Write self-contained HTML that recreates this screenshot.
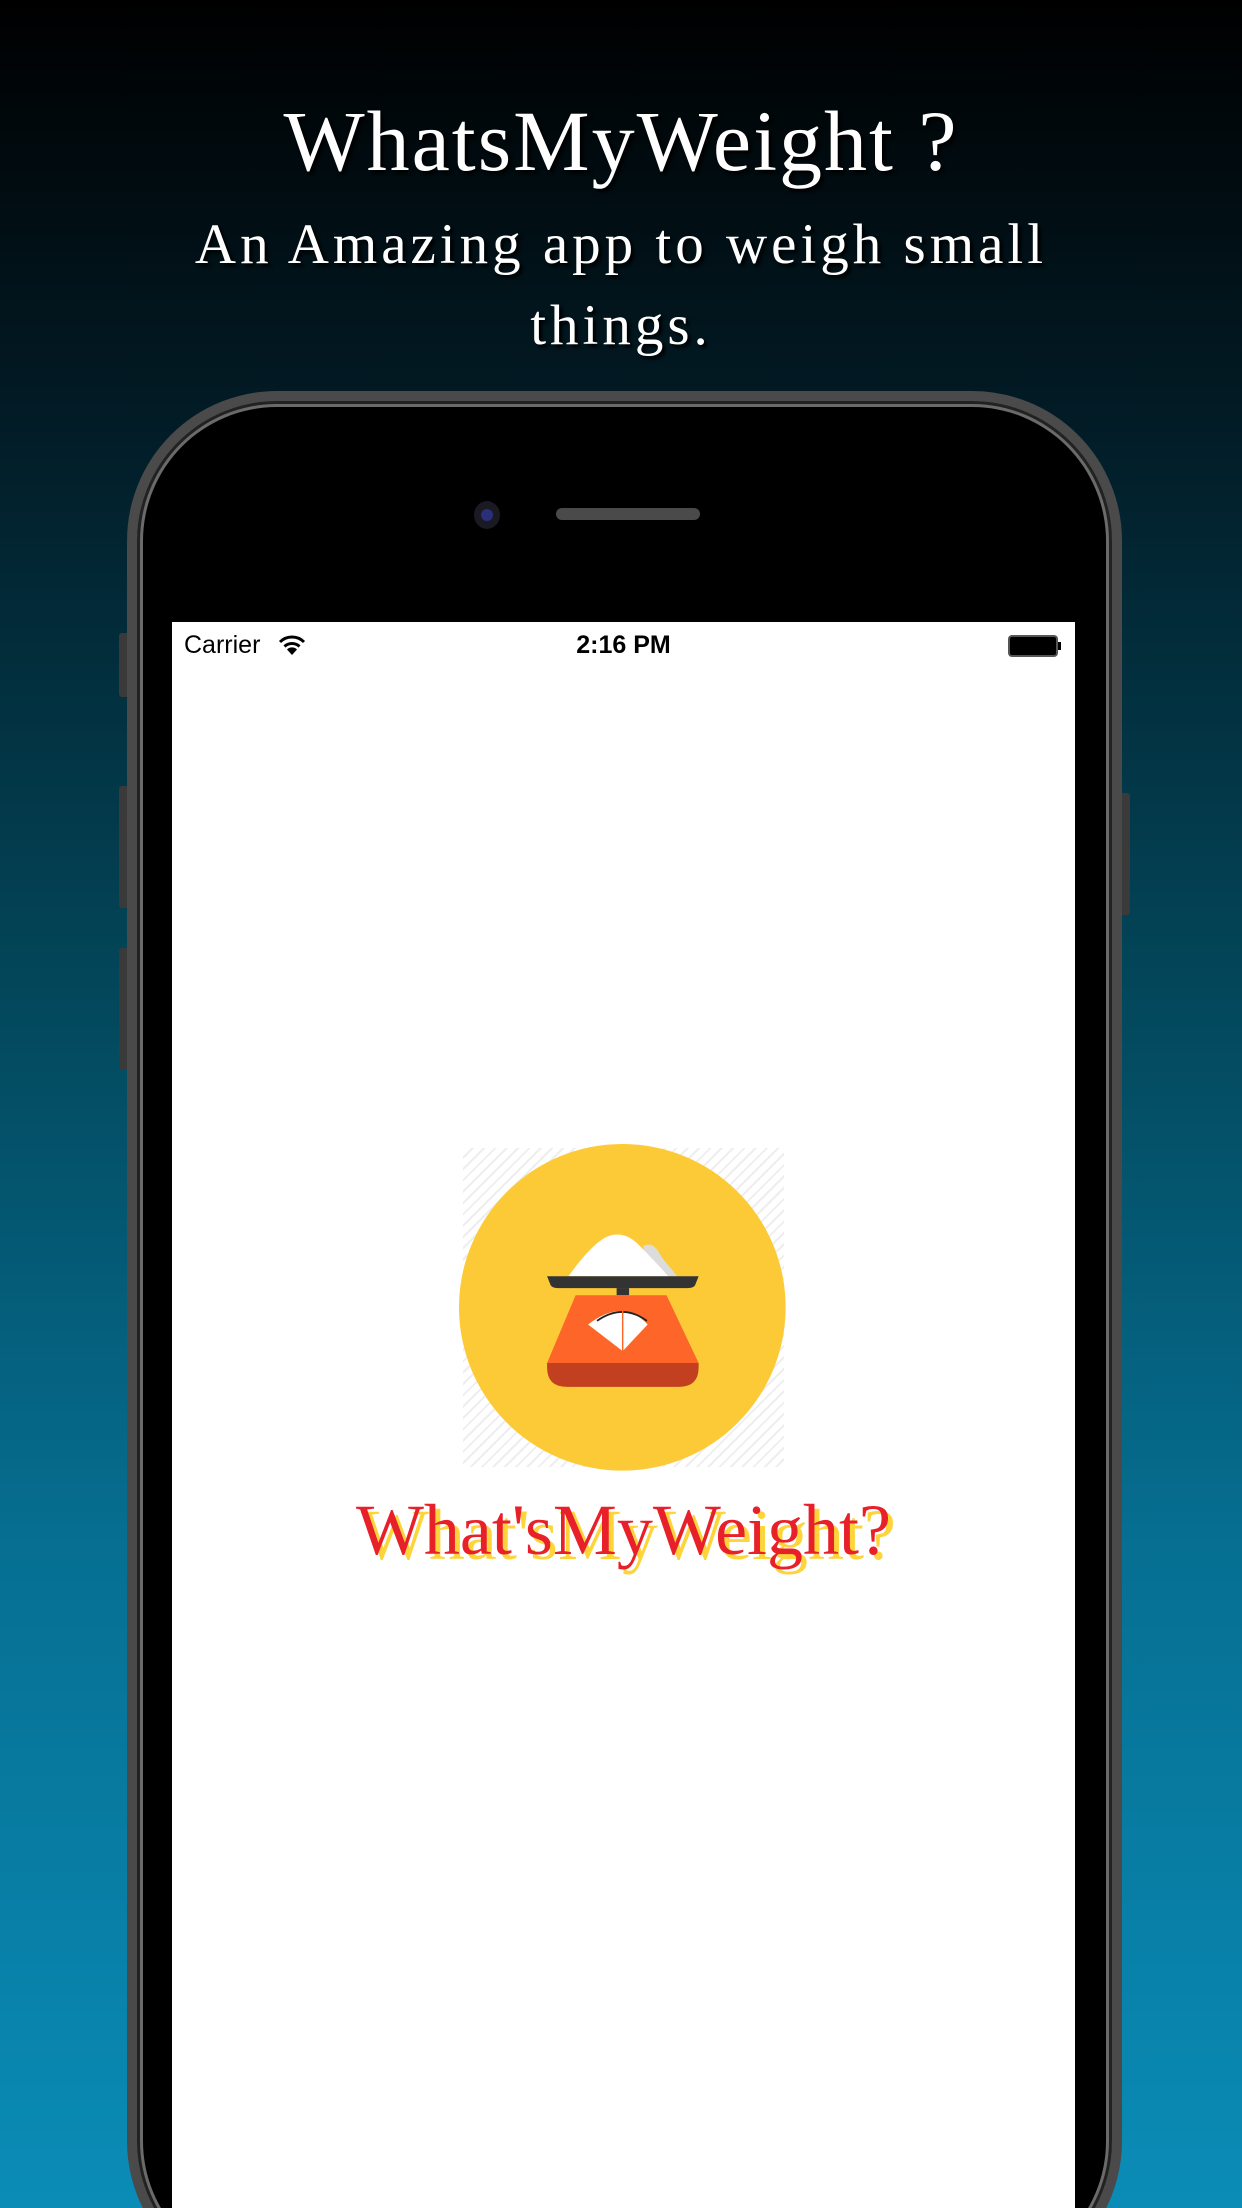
<!DOCTYPE html>
<html><head><meta charset="utf-8"><style>
*{margin:0;padding:0;box-sizing:border-box}
html,body{width:1242px;height:2208px;overflow:hidden}
#w{position:absolute;left:0;top:0;width:1242px;height:2208px;overflow:hidden;background:linear-gradient(180deg,#000 0%,#021a24 18%,#03475b 45%,#066f92 70%,#0a8cb7 100%);font-family:"Liberation Serif",serif}
.t{position:absolute;left:0;width:1242px;text-align:center;color:#fff;text-shadow:3px 3px 3px #000}
.phone{position:absolute;left:127px;top:391px;width:995px;height:1900px;border-radius:150px;background:#000;border:10px solid #4a4a4a;box-shadow:inset 0 0 0 3px #222,inset 0 0 0 6px #6a6a6a}
.btn{position:absolute;background:#3a3a3a;border-radius:3px}
.screen{position:absolute;left:172px;top:622px;width:903px;height:1600px;background:#fff}
</style></head><body><div id="w">
<div class="t" style="top:96px;font-size:86px;line-height:90px;letter-spacing:2px">WhatsMyWeight ?</div>
<div class="t" style="top:204px;font-size:57px;line-height:81px;letter-spacing:4px;padding:0 150px">An Amazing app to weigh small things.</div>
<div class="btn" style="left:119px;top:633px;width:10px;height:64px"></div>
<div class="btn" style="left:119px;top:786px;width:10px;height:122px"></div>
<div class="btn" style="left:119px;top:948px;width:10px;height:122px"></div>
<div class="btn" style="left:1120px;top:793px;width:10px;height:122px"></div>
<div class="phone"></div>
<div style="position:absolute;left:474px;top:501px;width:26px;height:28px;border-radius:50%;background:#1a1a22"><div style="position:absolute;left:7px;top:8px;width:12px;height:12px;border-radius:50%;background:#2a2f7a"></div></div>
<div style="position:absolute;left:556px;top:508px;width:144px;height:12px;border-radius:6px;background:#4a4a4a"></div>
<div class="screen">
<div style="position:absolute;left:12px;top:9px;font-family:'Liberation Sans',sans-serif;font-size:25px;color:#000">Carrier</div>
<svg style="position:absolute;left:106px;top:12px" width="28" height="22" viewBox="0 0 28 22"><path d="M2 8a17 17 0 0 1 24 0" fill="none" stroke="#000" stroke-width="3"/><path d="M6.5 12.5a11 11 0 0 1 15 0" fill="none" stroke="#000" stroke-width="3"/><path d="M9 15.5 L14 21 L19 15.5a7 7 0 0 0-10 0z" fill="#000"/></svg>
<div style="position:absolute;left:0;width:903px;top:9px;text-align:center;font-family:'Liberation Sans',sans-serif;font-size:25px;font-weight:bold;color:#000">2:16 PM</div>
<div style="position:absolute;left:836px;top:13px;width:50px;height:22px;border:2px solid #555;border-radius:4px;background:#000"></div>
<div style="position:absolute;left:886px;top:20px;width:3px;height:8px;background:#000"></div>
<div style="position:absolute;left:291px;top:526px;width:321px;height:319px;background:repeating-linear-gradient(135deg,#fff 0 6px,#eee 6px 8px)"></div>
<svg style="position:absolute;left:287px;top:522px" width="327" height="327" viewBox="333 74 917 917">
<circle cx="791" cy="532" r="458" fill="#fdca37"/>
<path d="M850 360 Q880 345 900 390 L945 445 L860 445 Z" fill="#dcdcdc"/>
<path d="M640 445 Q700 360 745 335 Q790 315 830 350 Q880 400 920 445 Z" fill="#fff"/>
<path d="M580 445 H1005 L995 470 Q990 478 975 478 H610 Q595 478 590 470 Z" fill="#333"/>
<rect x="775" y="478" width="35" height="20" fill="#333"/>
<path d="M660 498 H915 L1005 688 H580 Z" fill="#fd6529"/>
<path d="M580 688 H1005 V700 Q1005 755 950 755 H635 Q580 755 580 700 Z" fill="#c23f1f"/>
<path d="M695 580 Q792 505 862 580 L792 655 Z" fill="#fff"/>
<path d="M720 570 Q792 520 860 570" fill="none" stroke="#222" stroke-width="5"/>
<line x1="792" y1="540" x2="792" y2="655" stroke="#fd6529" stroke-width="4"/>
</svg>
<div style="position:absolute;left:0;width:903px;top:866px;text-align:center;font-size:72px;line-height:84px;color:#e8202a;text-shadow:5px 5px 0 #fdd53a;letter-spacing:0px">What'sMyWeight?</div>
</div>
</div></body></html>
